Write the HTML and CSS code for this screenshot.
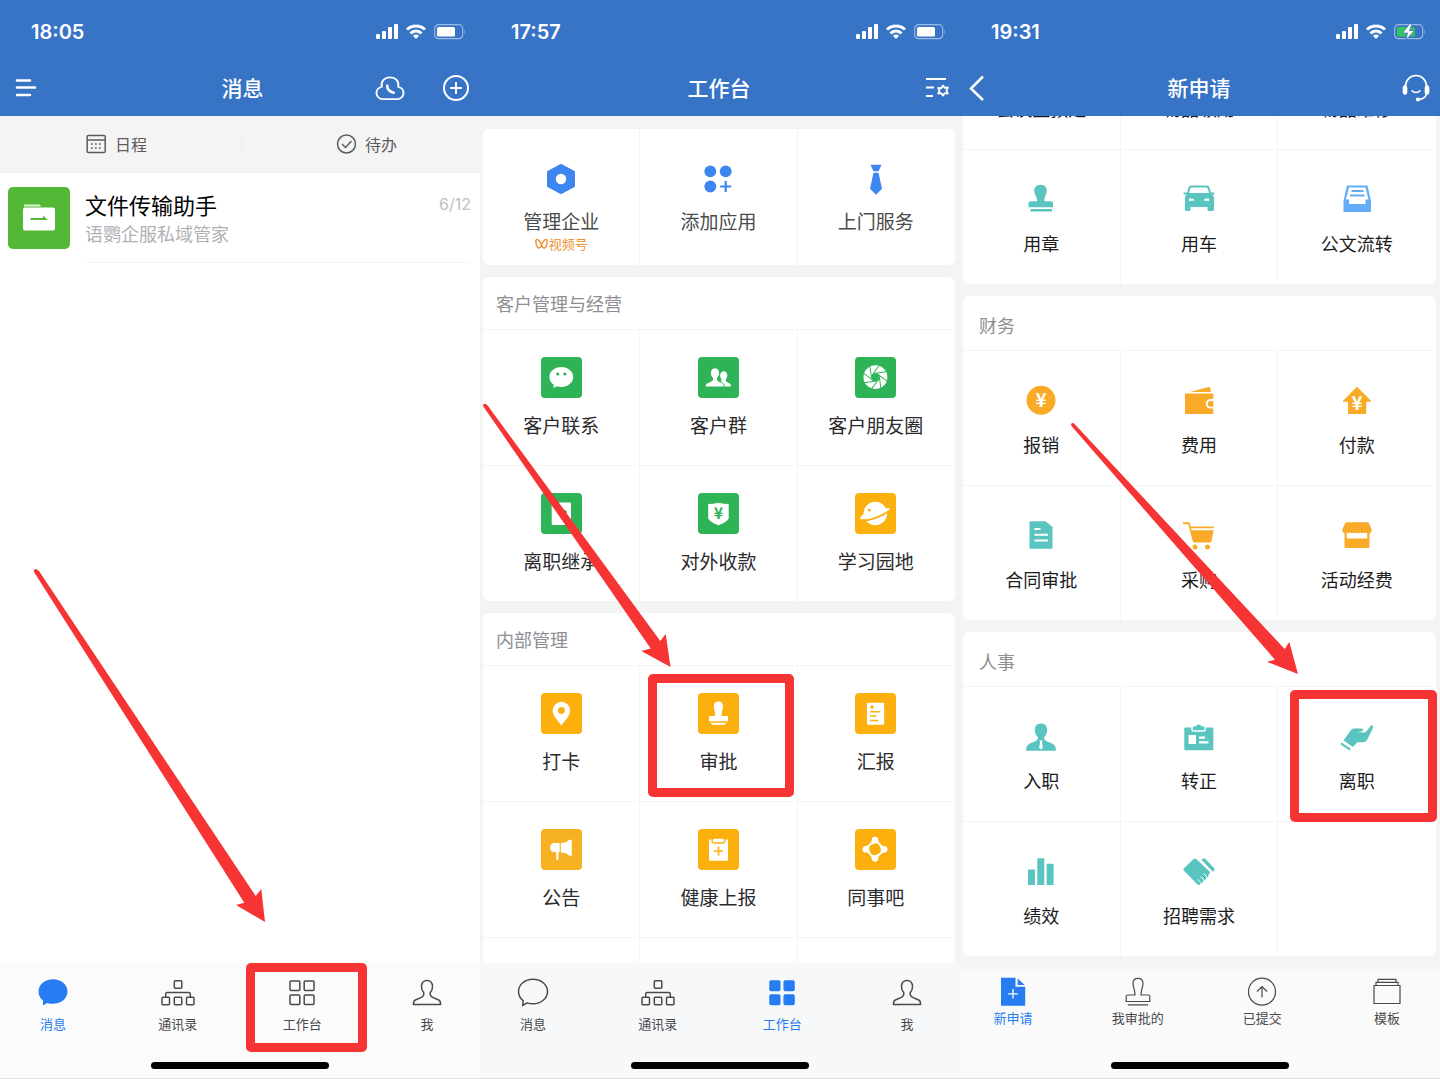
FILE: index.html
```html
<!DOCTYPE html>
<html lang="zh-CN">
<head>
	<meta charset="utf-8">
	<meta name="viewport" content="width=device-width, initial-scale=1">
	<title>企业微信</title>
	<link rel="stylesheet" href="styles.css">
</head>

<body>

<!-- 公用图标 -->
<svg class="sprite" aria-hidden="true">
	<symbol id="i-signal" viewBox="0 0 52 18">
		<rect x="0" y="11" width="4" height="5" rx="1"/><rect x="6" y="8" width="4" height="8" rx="1"/>
		<rect x="12" y="4" width="4" height="12" rx="1"/><rect x="18" y="1" width="4" height="15" rx="1"/>
		<g fill="none" stroke="#fff" stroke-width="3"><path d="M31 6.500a13 13 0 0 1 18 0"/><path d="M34.500 10.300a8 8 0 0 1 11 0"/></g>
		<path d="M40 16l-3-3.200a4.500 4.500 0 0 1 6 0z"/>
	</symbol>
	<symbol id="i-battery" viewBox="0 0 32 18">
		<rect x=".7" y="1.700" width="28" height="14" rx="4" fill="none" stroke="#fff" stroke-opacity=".5" stroke-width="1.200"/>
		<path d="M30.300 6.500q1.500 2.200 0 4.500z" fill-opacity=".5"/>
		<rect x="3" y="4" width="18" height="9.500" rx="1.500"/>
	</symbol>
	<symbol id="i-tree" viewBox="-2 0 36 32">
		<g fill="none" stroke="currentColor" stroke-width="1.500">
			<rect x="12.300" y="3.700" width="7.500" height="7.500" rx="1"/><rect x="0" y="20.200" width="7.500" height="7.500" rx="1"/>
			<rect x="12.300" y="20.200" width="7.500" height="7.500" rx="1"/><rect x="24.500" y="20.200" width="7.500" height="7.500" rx="1"/>
			<path d="M3.700 20v-3q0-1.500 1.500-1.500h21.600q1.500 0 1.500 1.500v3"/>
		</g>
	</symbol>
	<symbol id="i-grid" viewBox="0 0 32 32">
		<rect x="4" y="4" width="9.800" height="9.600" rx="1"/><rect x="18.200" y="4" width="9.800" height="9.600" rx="1"/>
		<rect x="4" y="18" width="9.800" height="9.600" rx="1"/><rect x="18.200" y="18" width="9.800" height="9.600" rx="1"/>
	</symbol>
	<symbol id="i-chat" viewBox="0 0 32 32">
		<path d="M16 2.200C24 2.200 30.500 7.500 30.500 14.500S24 26.800 16 26.800c-2 0-4-.3-5.700-.9L5.800 28.500l.3-4.800C3.300 21.500 1.500 18.200 1.500 14.500 1.500 7.500 8 2.200 16 2.200z"/>
	</symbol>
	<symbol id="i-me" viewBox="0 0 32 32">
		<path fill="none" stroke="currentColor" stroke-width="1.500" stroke-linejoin="round" d="M16 3.400c3.300 0 5.500 2.400 5.500 6 0 2.600-.8 4.600-2.200 6-.5 2.600.2 4 2.400 5l6 2.600c1.400.6 1.900 1.600 1.900 4.600H2.400c0-3 .5-4 1.900-4.600l6-2.600c2.200-1 2.900-2.400 2.400-5-1.400-1.400-2.200-3.400-2.200-6 0-3.600 2.200-6 5.500-6z"/>
	</symbol>
</svg>

<div class="screens">

<!-- 消息 -->
<section class="phone">
	<header class="top">
		<div class="status">
			<span>18:05</span>
			<div class="status-icons">
				<svg width="52" height="18"><use href="#i-signal"/></svg>
				<svg width="32" height="18"><use href="#i-battery"/></svg>
			</div>
		</div>
		<div class="navbar navbar-home">
			<div class="nav-side">
				<button type="button" aria-label="菜单"><svg width="22" height="22" viewBox="0 0 22 22" stroke="#fff" stroke-width="2.500" stroke-linecap="round"><path d="M2 3.500h13M2 10.500h18M2 18h13"/></svg></button>
			</div>
			<h1>消息</h1>
			<div class="nav-side nav-right">
				<button type="button" aria-label="通话"><svg width="30" height="26" viewBox="0 0 32 28" fill="none" stroke="#fff" stroke-width="2"><path d="M8 26a6.700 6.700 0 0 1-1-13.300c-.8-6 3-10.200 9-10.200s9.800 4.200 9 10.200A6.700 6.700 0 0 1 24 26z"/><path d="M13 11.500q0 5.500 7 7.500" stroke-width="2.800" stroke-linecap="round"/></svg></button>
				<button type="button" aria-label="新建"><svg width="28" height="28" viewBox="0 0 28 28" fill="none" stroke="#fff" stroke-width="2"><circle cx="14" cy="14" r="12"/><path d="M14 8v12M8 14h12"/></svg></button>
			</div>
		</div>
	</header>

	<div class="shortcuts">
		<a href="#"><svg width="21" height="20" viewBox="0 0 21 20" fill="none" stroke="#5c5c5e" stroke-width="1.500"><rect x="1.200" y="1.500" width="18" height="17" rx="1"/><path d="M1 6h18.500"/><path stroke-dasharray="1.700 2.300" d="M5 10h11M5 14h11" stroke-width="1.700"/></svg>日程</a>
		<i></i>
		<a href="#"><svg width="21" height="20" viewBox="0 0 21 20" fill="none" stroke="#5c5c5e" stroke-width="1.500"><circle cx="10.500" cy="10" r="9"/><path d="M6 10l3.500 3.500 6-6.500"/></svg>待办</a>
	</div>

	<main class="chats">
		<a class="chat" href="#">
			<svg class="avatar" viewBox="0 0 62 62"><rect width="62" height="62" rx="5" fill="#53b835"/><path d="M16 17.500h16l1 2H16z" fill="#dff3d8"/><rect x="15" y="20.500" width="32" height="23" rx="2" fill="#fff"/><path d="M22.500 31v2H40l-5-4.500V31z" fill="#53b835"/></svg>
			<div class="chat-info">
				<div class="chat-line"><strong>文件传输助手</strong><time>6/12</time></div>
				<p>语鹦企服私域管家</p>
			</div>
		</a>
	</main>

	<nav class="tabbar">
		<div class="tabs">
			<a class="tab on" href="#"><svg width="32" height="32" fill="currentColor"><use href="#i-chat"/></svg>消息</a>
			<a class="tab" href="#"><svg width="36" height="32"><use href="#i-tree"/></svg>通讯录</a>
			<a class="tab" href="#"><svg width="32" height="32" fill="none" stroke="currentColor" stroke-width="1.500"><use href="#i-grid"/></svg>工作台<b class="mark mark-tab"></b></a>
			<a class="tab" href="#"><svg width="32" height="32"><use href="#i-me"/></svg>我</a>
		</div>
		<div class="home-line"></div>
	</nav>

	<svg class="arrow"><path d="M34 572Q33 569 36 569L39 571 255.700 896 261.300 889 265 922 236 905 244.300 902.700z"/></svg>
</section>

<!-- 工作台 -->
<section class="phone desk">
	<header class="top">
		<div class="status">
			<span>17:57</span>
			<div class="status-icons">
				<svg width="52" height="18"><use href="#i-signal"/></svg>
				<svg width="32" height="18"><use href="#i-battery"/></svg>
			</div>
		</div>
		<div class="navbar">
			<div class="nav-side"></div>
			<h1>工作台</h1>
			<div class="nav-side nav-right">
				<button type="button" aria-label="设置"><svg width="25" height="24" viewBox="0 0 25 24" fill="none" stroke="#fff" stroke-width="2.200"><path d="M1 3h20M1 11.500h8M1 20h7"/><path stroke-width="1.800" stroke-linejoin="round" d="M18 9.600l1.800 2.300 3-.4-1.200 2.800.1.900 1.100 2.300-3-.4-1.800 2.500-1.800-2.500-3 .4 1.200-2.700-1.200-2.900 3 .4z"/></svg></button>
			</div>
		</div>
	</header>

	<main class="body">
		<div class="card card-top">
			<a class="cell" href="#">
				<svg class="ico" viewBox="0 0 32 32" fill="#3d86f0"><path stroke="#3d86f0" stroke-width="2" stroke-linejoin="round" d="M16 2l13 7v14l-13 7-13-7V9z"/><circle cx="16" cy="16" r="5.200" fill="#fff"/></svg>
				管理企业
				<small><svg width="13" height="12" viewBox="0 0 13 12" fill="none" stroke="#ef8f31" stroke-width="1.400" stroke-linejoin="round"><path d="M6.500 7C5 3 2.500.5 1.300 1.700S1.500 9.500 3.500 10 6 8 6.500 7C8 3 10.500.5 11.700 1.700S11.500 9.500 9.500 10 7 8 6.500 7z"/></svg>视频号</small>
			</a>
			<a class="cell" href="#">
				<svg class="ico" viewBox="0 0 32 32" fill="#3d86f0"><circle cx="8.300" cy="8.300" r="5.900"/><circle cx="23.700" cy="8.300" r="5.900"/><circle cx="8.300" cy="23.500" r="5.900"/><path d="M23.700 18v11M18.200 23.500h11" stroke="#3d86f0" stroke-width="2.200"/></svg>
				添加应用
			</a>
			<a class="cell" href="#">
				<svg class="ico" viewBox="0 0 32 32" fill="#3d86f0"><path d="M10.500 1.700h11l-3 6.500h-5zM13.500 9.700h5l3.500 16-6 6-6-6z"/></svg>
				上门服务
			</a>
		</div>

		<div class="card">
			<h2>客户管理与经营</h2>
			<a class="cell" href="#">
				<svg class="tile green" viewBox="0 0 41 41"><path d="M20.300 10c6.700 0 11.900 4.400 11.900 10s-5.200 10-11.900 10c-1.500 0-3-.2-4.300-.7L12.300 31l.5-3.200C10 26 8.400 23.200 8.400 20c0-5.600 5.200-10 11.900-10z"/><g fill="#2eb457"><circle cx="16.700" cy="17" r="1.600"/><circle cx="23.900" cy="17" r="1.600"/></g></svg>
				客户联系
			</a>
			<a class="cell" href="#">
				<svg class="tile green" viewBox="0 0 41 41"><path d="M25.800 14.300c2.200 0 3.500 1.700 3.500 4 0 1.700-.6 3-1.500 4-.1 1.500.2 2.400 1.400 3 2.700 1.200 3.800 1.700 3.800 4.200H22l1.500-7c-.8-1-1.300-2.500-1.300-4.200 0-2.300 1.400-4 3.600-4z"/><path stroke="#2eb457" stroke-width="1" d="M17 10.800c2.900 0 4.500 2.200 4.500 5.100 0 2.200-.8 4-2 5-.2 2 .2 3 1.700 3.700 4 1.600 5 2 5 5.400H7.300c0-3.400 1.400-3.800 5.300-5.400 1.700-.7 2.100-1.700 1.900-3.700-1.200-1-2-2.800-2-5 0-2.900 1.600-5.100 4.500-5.100z"/></svg>
				客户群
			</a>
			<a class="cell" href="#">
				<svg class="tile green" viewBox="0 0 41 41"><circle cx="20.400" cy="20.200" r="11.900"/><circle cx="20.400" cy="20.200" r="4" fill="#2eb457"/>
					<g transform="translate(20.400 20.200)" stroke="#2eb457" stroke-width="1"><path id="blade" d="M-1-3.800L11-5.500"/><use href="#blade" transform="rotate(45)"/><use href="#blade" transform="rotate(90)"/><use href="#blade" transform="rotate(135)"/><use href="#blade" transform="rotate(180)"/><use href="#blade" transform="rotate(225)"/><use href="#blade" transform="rotate(270)"/><use href="#blade" transform="rotate(315)"/></g></svg>
				客户朋友圈
			</a>
			<a class="cell" href="#">
				<svg class="tile green" viewBox="0 0 41 41"><rect x="10.700" y="9.500" width="19.300" height="22.500" rx="1"/><path d="M20 18.500q3.500-3.500 6 0l-1 3h-4z" fill="#2eb457"/></svg>
				离职继承
			</a>
			<a class="cell" href="#">
				<svg class="tile green" viewBox="0 0 41 41"><path d="M10.200 11q5 0 10.200-1.200Q25.500 11 30.700 11v14.500q-2.500 4-10.300 6.800-7.700-2.800-10.200-6.800z"/><text x="20.400" y="26" font-size="16" fill="#2eb457">¥</text></svg>
				对外收款
			</a>
			<a class="cell" href="#">
				<svg class="tile" viewBox="0 0 41 41"><circle cx="20.300" cy="20.500" r="11.700"/><path d="M9 22Q2.500 28 8 27.300 14 27.500 22 24.300T34.500 17" fill="none" stroke="#fcb00d" stroke-width="1.800"/><path d="M9.500 20.500Q3.500 25 5.500 26 10 27 20 23.300T34.500 16.700q1-2.500-4-1.200L22 19z"/><circle cx="14.300" cy="17" r="1.500" fill="#fcb00d"/></svg>
				学习园地
			</a>
		</div>

		<div class="card">
			<h2>内部管理</h2>
			<a class="cell" href="#">
				<svg class="tile" viewBox="0 0 41 41"><path d="M20.400 8.800a8.800 8.800 0 0 1 8.800 8.800c0 5-5 10-8.800 14.900-3.800-4.900-8.800-9.900-8.800-14.900a8.800 8.800 0 0 1 8.800-8.800z"/><circle cx="20.400" cy="17.500" r="3.400" fill="#fcb00d"/></svg>
				打卡
			</a>
			<a class="cell" href="#">
				<svg class="tile" viewBox="0 0 41 41"><path d="M20.400 8.500c3 0 4.600 2 4.600 4.600 0 3-1.600 5.500-1.300 10h6.300v5.200H11v-5.200h6.100c.3-4.500-1.300-7-1.300-10 0-2.600 1.600-4.600 4.600-4.600zM12.500 29.700h16l-1.500 2H14z"/></svg>
				审批
				<b class="mark mark-approve"></b>
			</a>
			<a class="cell" href="#">
				<svg class="tile" viewBox="0 0 41 41"><rect x="12" y="9.700" width="17.200" height="22" rx="1"/><circle cx="17" cy="14" r="1.700" fill="#fcb00d"/><path d="M15 18.700h10.500M15 23h6.500M15 27.500h8.500" stroke="#fcb00d" stroke-width="1.500"/></svg>
				汇报
			</a>
			<a class="cell" href="#">
				<svg class="tile notice" viewBox="0 0 41 41"><path d="M18.700 14h-5a4.600 4.600 0 0 0 0 9.300h1.500v7.500h2.200v-7.500h1.300zM19.800 14q5 0 8.500-3.200h2.500v16h-2.500q-3.500-3.300-8.500-3.300z"/></svg>
				公告
			</a>
			<a class="cell" href="#">
				<svg class="tile" viewBox="0 0 41 41"><rect x="11" y="10.500" width="19" height="21.200" rx="1"/><rect x="14" y="9" width="13" height="5" rx="2.500" stroke="#fcb00d" stroke-width="1.300"/><path d="M20.500 17.500v9M16 22h9" stroke="#fcb00d" stroke-width="1.700"/></svg>
				健康上报
			</a>
			<a class="cell" href="#">
				<svg class="tile" viewBox="0 0 41 41"><g transform="translate(20 20.300)"><path id="mate" d="M-3.300-9a3.300 3.300 0 0 1 6.600-.3C3.500-6.500 5.500-5.500 8-3.300 5.500-4.500 3-5.500 1-6 -2-5.700-5-4-7.300-1.500-6-4.500-3.300-6-3.300-9z"/><use href="#mate" transform="rotate(90)"/><use href="#mate" transform="rotate(180)"/><use href="#mate" transform="rotate(270)"/></g></svg>
				同事吧
			</a>
			<div class="cell"></div>
			<div class="cell"></div>
			<div class="cell"></div>
		</div>
	</main>

	<nav class="tabbar">
		<div class="tabs">
			<a class="tab" href="#"><svg width="32" height="32" fill="none" stroke="currentColor" stroke-width="1.500"><use href="#i-chat"/></svg>消息</a>
			<a class="tab" href="#"><svg width="36" height="32"><use href="#i-tree"/></svg>通讯录</a>
			<a class="tab on" href="#"><svg width="32" height="32" fill="currentColor" stroke="currentColor" stroke-width="1.500"><use href="#i-grid"/></svg>工作台</a>
			<a class="tab" href="#"><svg width="32" height="32"><use href="#i-me"/></svg>我</a>
		</div>
		<div class="home-line"></div>
	</nav>

	<svg class="arrow"><path d="M3 406Q3 403 6 404L8 406 180.300 641 185.700 634 190.500 667 161.300 651 170.700 648.500z"/></svg>
</section>

<!-- 新申请 -->
<section class="phone apply">
	<header class="top">
		<div class="status">
			<span>19:31</span>
			<div class="status-icons">
				<svg width="52" height="18"><use href="#i-signal"/></svg>
				<svg width="32" height="18" viewBox="0 0 32 18"><rect x=".7" y="1.700" width="28" height="14" rx="4" fill="none" stroke="#fff" stroke-opacity=".5" stroke-width="1.200"/><path d="M30.300 6.500q1.500 2.200 0 4.500z" fill-opacity=".5"/><rect x="3" y="4" width="18" height="9.500" rx="1.500" fill="#33c759"/><path d="M16 .5L8.500 10h5L12 17l8.500-9.500h-5L18 1z" stroke="#3774c6" stroke-width=".8"/></svg>
			</div>
		</div>
		<div class="navbar">
			<div class="nav-side">
				<button type="button" aria-label="返回"><svg width="18" height="26" viewBox="0 0 18 26" fill="none" stroke="#fff" stroke-width="2.500"><path d="M15 1.500L3 13.500 15 25"/></svg></button>
			</div>
			<h1>新申请</h1>
			<div class="nav-side nav-right">
				<button type="button" aria-label="客服"><svg width="28" height="28" viewBox="0 0 28 28" fill="none" stroke="#fff" stroke-width="1.600"><path d="M3.500 12a10.500 10.500 0 0 1 21 0"/><rect x="1.500" y="12" width="3" height="8" rx="1.500" fill="#fff"/><rect x="23.500" y="12" width="3" height="8" rx="1.500" fill="#fff"/><path d="M24.500 20q-1.500 5-8 5.500M9.500 16.500q4.500 4 9 0"/><circle cx="16" cy="25.500" r="1.300" fill="#fff"/></svg></button>
			</div>
		</div>
	</header>

	<main class="body">
		<div class="card">
			<a class="cell" href="#"><i class="ico"></i>会议室预定</a>
			<a class="cell" href="#"><i class="ico"></i>物品领用</a>
			<a class="cell" href="#"><i class="ico"></i>物品维修</a>
			<a class="cell" href="#">
				<svg class="ico teal" viewBox="0 0 32 32"><path d="M15.500 1.700c4 0 6.300 2.800 6.300 6.300 0 3.500-3 6-2.300 10.300H26q2 0 2 2v4H3.500v-4q0-2 2-2H12c.5-4.300-2.800-6.800-2.800-10.300 0-3.500 2.300-6.300 6.300-6.300zM5.500 26h21.500v2.500H5.500z"/></svg>
				用章
			</a>
			<a class="cell" href="#">
				<svg class="ico teal" viewBox="0 0 32 32"><path fill-rule="evenodd" d="M8.500 2.500h15q2.500 0 3 2l1.500 5h3.500v2h-2.300q1.800 1 1.800 3.500v11.500q0 1.500-1.500 1.500H26q-1.500 0-1.500-1.500V24h-17v2.500Q7.500 28 6 28H3.500Q2 28 2 26.500V15q0-2.500 1.500-3.500H.5v-2H4l1.500-5q.5-2 3-2zm0 2q-1 0-1.500 2l-1 3.500h20l-1-3.500q-.5-2-1.500-2zM6 15.500v2.500l5.500-.5q-.5-2-3-2zm20 0h-2.500q-2.500 0-3 2l5.500.5z"/></svg>
				用车
			</a>
			<a class="cell" href="#">
				<svg class="ico" viewBox="0 0 32 32" fill="#65acf8"><path fill-rule="evenodd" d="M6 2.500h20.500L30 18v11H2.500V18zM8 4.500L5 16.500h3V21h16.500v-4.500h3L24.500 4.500z"/><path d="M10.500 8h12M9 12.500h14.500" stroke="#65acf8" stroke-width="2"/></svg>
				公文流转
			</a>
		</div>

		<div class="card">
			<h2>财务</h2>
			<a class="cell" href="#">
				<svg class="ico gold" viewBox="0 0 32 32"><circle cx="16" cy="16.300" r="14.500"/><text x="16" y="23" font-size="19" fill="#fff">¥</text></svg>
				报销
			</a>
			<a class="cell" href="#">
				<svg class="ico gold" viewBox="0 0 32 32"><path d="M7 8L25.500 3q1.500-.2 1.700 1l.8 4zM2 9.500h28.300V30H2z"/><path d="M30.800 16H27.500a3.800 3.800 0 0 0 0 7.600h3.300" fill="none" stroke="#fff" stroke-width="1.900"/></svg>
				费用
			</a>
			<a class="cell" href="#">
				<svg class="ico gold" viewBox="0 0 32 32"><path d="M16 2.800l14 14v1h-4.800V30H7V17.800H2v-1z"/><text x="16" y="26" font-size="19" fill="#fff">¥</text></svg>
				付款
			</a>
			<a class="cell" href="#">
				<svg class="ico teal" viewBox="0 0 32 32"><path d="M5.500 2.200h15L27.500 8v21.700h-23V3.200q0-1 1-1z"/><path d="M9.500 10h6M9.500 15.700H23M9.500 21.500H23" stroke="#fff" stroke-width="2"/></svg>
				合同审批
			</a>
			<a class="cell" href="#">
				<svg class="ico gold" viewBox="0 0 32 32"><path d="M0 3.300h6.500l1.200 4.200H31l-.3 1.700H8.200l.4 2h22L28.500 22q-.3 1.500-2 1.500h-15q-1.500 0-1.800-1.500L5.200 5.300H0z"/><circle cx="12" cy="28" r="2.500"/><circle cx="24.500" cy="28" r="2.500"/></svg>
				采购
			</a>
			<a class="cell" href="#">
				<svg class="ico gold" viewBox="0 0 32 32"><path d="M6 3.300h20q1.500 0 2 1.200l2.500 5.500q.5 3.500-2 4.500v13.300q0 1.300-1.300 1.300H4.800q-1.300 0-1.300-1.300V14.500q-2.500-1-2-4.500L4 4.500q.5-1.200 2-1.200z"/><path d="M5.800 13.500q1.700 1.500 3.400 0 1.700 1.500 3.400 0 1.700 1.500 3.400 0 1.700 1.500 3.400 0 1.700 1.500 3.400 0 1.700 1.500 3.400 0V19.500H5.800z" fill="#fff"/></svg>
				活动经费
			</a>
		</div>

		<div class="card">
			<h2>人事</h2>
			<a class="cell" href="#">
				<svg class="ico teal" viewBox="0 0 32 32"><path d="M16 3.500c4 0 6.200 2.800 6.200 6.500 0 3-1.200 5.500-3 7-.3 2 .5 3.500 2.500 4.200l5.500 2.300q3.800 2 3.800 7.200H1q0-5.200 3.800-7.200l5.500-2.300c2-.7 2.800-2.200 2.500-4.200-1.800-1.500-3-4-3-7 0-3.700 2.200-6.500 6.200-6.500z"/><path d="M14.500 20.500h3l-.6 2 1 5.200L16 29.500l-1.900-1.800 1-5.200z" fill="#fff"/></svg>
				入职
			</a>
			<a class="cell" href="#">
				<svg class="ico teal" viewBox="0 0 32 32"><rect x="1.300" y="7.500" width="29" height="22.700" rx="1"/><path d="M9 6.500v3q0 1.500 1.500 1.500h10q1.500 0 1.500-1.500v-3" fill="none" stroke="#fff" stroke-width="1.500"/><path d="M10 7q0-.5 3-.8.700-1.700 2.700-1.700t2.700 1.700q3 .3 3 .8v1.500q0 1-1 1h-9.400q-1 0-1-1z"/><path d="M5.500 15h7.500v9H5.500zM16 16.500h6v2.200h-6zM16 21.300h9.500v2.200H16z" fill="#fff"/></svg>
				转正
			</a>
			<a class="cell" href="#">
				<svg class="ico teal" viewBox="0 0 32 32"><path d="M2.500 20.500L10 10q1.200-1.500 3-1.500h7.500q1.800 0 1.800 1.300T20.500 11.500l-4.500.7 7 .3q1.500 0 2.500-1.200L29.500 6q1.200-1.300 2.300-.5t.3 2.200L26 20q-1.200 2.300-4 2.300h-5.500L12 27z"/><path d="M.7 24l7.800 5.200" fill="none" stroke="#5ac4c0" stroke-width="2.200" stroke-linecap="round"/></svg>
				离职
				<b class="mark mark-leave"></b>
			</a>
			<a class="cell" href="#">
				<svg class="ico teal" viewBox="0 0 32 32"><rect x="3" y="14.500" width="7" height="15.500" rx=".5"/><rect x="12.300" y="3.300" width="7" height="26.700" rx=".5"/><rect x="21.600" y="8.700" width="7" height="21.300" rx=".5"/></svg>
				绩效
			</a>
			<a class="cell" href="#">
				<svg class="ico teal" viewBox="0 0 32 32"><path d="M10.500 4q1.500-1.200 3 .2L26.500 16.500q1 1.300 0 2.200l-1.300.8q1 1.500-.3 2.500t-2.200.3q.8 1.500-.5 2.500t-2.200.2q.8 1.500-.5 2.500t-2.200.1q.5 1.500-.5 2.200t-2.300-.2L.8 15.500q-1-1 0-2z"/><path d="M18.500 5l1-1q1.500-1.300 3 0l8.500 9q1 1.300 0 2.500L29.500 17z"/><path d="M16.500 4L29 17" stroke="#fff" stroke-width="1.300"/><path d="M20.500 18.500l3.700 3.500M17.500 21.500l3.500 3.300M14.700 24.500l3 2.700" stroke="#fff" stroke-width="1"/></svg>
				招聘需求
			</a>
			<div class="cell"></div>
		</div>
	</main>

	<nav class="tabbar">
		<div class="tabs">
			<a class="tab on" href="#"><svg width="32" height="32" viewBox="0 0 32 32" fill="currentColor"><path d="M4 1.700h14.500v9h9.700v19H4z"/><path d="M20.700 2.500l7 6.500h-7z"/><path d="M16 13v9.500M11.200 17.800h9.600" stroke="#fff" stroke-width="1.300"/></svg>新申请</a>
			<a class="tab" href="#"><svg width="32" height="32" viewBox="0 0 32 32" fill="none" stroke="currentColor" stroke-width="1.200"><path d="M16 2.300c3.300 0 5 2.200 5 5.200 0 3.500-2 6.500-2 11.500h7.500q1.300 0 1.300 1.300v5.200H4.200v-5.200q0-1.300 1.300-1.300H13c0-5-2-8-2-11.500 0-3 1.700-5.200 5-5.200zM6 28.800h20"/></svg>我审批的</a>
			<a class="tab" href="#"><svg width="32" height="32" viewBox="0 0 32 32" fill="none" stroke="currentColor" stroke-width="1.200"><circle cx="16" cy="15.700" r="13.500"/><path d="M16 21.500V10.500M11 15.500l5-5 5 5"/></svg>已提交</a>
			<a class="tab" href="#"><svg width="32" height="32" viewBox="0 0 32 32" fill="none" stroke="currentColor" stroke-width="1.200"><path d="M3 9.500h26v18H3zM5 9V6.300h22V9M7 6V3.300h18V6"/></svg>模板</a>
		</div>
		<div class="home-line"></div>
	</nav>

	<svg class="arrow"><path d="M111.500 426Q110 423 113.500 423L115 424.500 324.700 649 329.300 642 338 674 306.700 661.700 315 659.700z"/></svg>
</section>

</div>
</body>
</html>
```

FILE: styles.css
```css
*{box-sizing:border-box;}
body{margin:0;background:#f4f4f5;color:#2b2b2d;font-family:"Noto Sans CJK SC","Noto Sans",sans-serif;}
a{color:inherit;text-decoration:none;}
h1,h2,p{margin:0;font-weight:normal;}
button{display:block;padding:0;border:0;background:none;cursor:pointer;}
svg{display:block;}
.sprite{position:absolute;width:0;height:0;}

.screens{display:grid;grid-template-columns:repeat(3,1fr);height:100vh;}
.phone{position:relative;display:flex;flex-direction:column;min-width:0;height:100%;overflow:hidden;background:#f4f4f5;}

/* 顶部 */
.top{flex:none;background:#3774c6;color:#fff;}
.status{display:flex;justify-content:space-between;align-items:center;height:63px;padding:0 14px 0 31px;font:600 20px/24px Inter,sans-serif;}
.status-icons{display:flex;gap:6px;fill:#fff;}
.navbar{display:grid;grid-template-columns:1fr auto 1fr;align-items:center;height:53px;padding:0 10px 3px 8px;}
.navbar-home{padding-left:15px;padding-right:10px;}
.navbar h1{padding-bottom:2px;font-size:21px;line-height:30px;font-weight:500;}
.nav-side{display:flex;align-items:center;}
.nav-right{justify-content:flex-end;gap:37px;}

/* 消息 */
.shortcuts{flex:none;display:flex;justify-content:space-between;align-items:center;height:57px;padding:0 83px 2px 86px;color:#5c5c5e;font-size:16px;line-height:24px;}
.shortcuts a{display:flex;align-items:center;gap:8px;}
.shortcuts i{width:1px;height:20px;background:#eeeef0;}
.chats{flex:1;background:#fff;}
.chat{display:flex;gap:15px;padding:0 9px 0 8px;}
.avatar{flex:none;width:62px;height:62px;margin-top:14px;}
.chat-info{flex:1;height:90px;padding-top:15px;border-bottom:1px solid #f4f4f5;}
.chat-line{display:flex;justify-content:space-between;align-items:center;}
.chat-line strong{font-size:22px;line-height:32px;font-weight:normal;color:#000;}
.chat-line time{font:16px/24px Inter,sans-serif;color:#bfc0c4;}
.chat p{font-size:18px;line-height:26px;color:#b0b1b6;}

/* 应用列表 */
.body{flex:1;display:flex;flex-direction:column;gap:12px;min-height:0;padding:13px 5px 0 3px;overflow:hidden;}
.card{flex:none;display:grid;grid-template-columns:repeat(3,1fr);background:#fff;border-radius:6px;}
.card h2{grid-column:1/-1;padding-left:13px;font-size:18px;line-height:52px;color:#8e8e93;}
.cell{position:relative;display:flex;flex-direction:column;align-items:center;height:136px;padding-top:27px;border-top:1px solid #f5f5f6;border-right:1px solid #f5f5f6;font-size:19px;line-height:28px;}
/* 每行最后一格不要右边线 */
.card .cell:nth-last-child(3n+1){border-right-color:transparent;}
.tile{width:41px;height:41px;margin-bottom:13px;border-radius:4px;background:#fcb00d;fill:#fff;}
.green{background:#2eb457;}
.notice{background:#f6b220;}
.ico{width:32px;height:32px;margin-bottom:12px;}
.tile text,.ico text{font-weight:bold;text-anchor:middle;}
.teal{fill:#5ac4c0;}
.gold{fill:#f9ab27;}
.card-top .cell{padding-top:33px;border-top-color:transparent;color:#4b4b4d;}
.cell small{display:flex;align-items:center;gap:1px;font-size:13px;line-height:18px;color:#ef8f31;}

/* 新申请，列表停在底部 */
.apply .body{justify-content:flex-end;padding:0 4px 13px 3px;}
.apply .card h2{padding:5px 0 0 16px;line-height:49px;}
.apply .cell{height:135px;padding-top:33px;color:#1c1c1e;font-size:18px;}
.apply .ico{margin-bottom:14px;}

/* 底部 */
.tabbar{flex:none;display:flex;flex-direction:column;justify-content:space-between;align-items:center;height:116px;padding:14px 13px 9px;background:#fbfbfb;border-bottom:1px solid #e0e0e2;}
.desk .tabbar{background:#f7f8fa;}
.apply .tabbar{height:110px;padding-top:7px;background:#fafafa;}
.tabs{display:flex;justify-content:space-between;width:100%;}
.tab{position:relative;display:flex;flex-direction:column;align-items:center;gap:5px;width:80px;font-size:13px;line-height:20px;color:#4a4a4d;}
.apply .tab{gap:0;}
.tab.on{color:#267cf0;}
.home-line{width:178px;height:7px;border-radius:4px;background:#000;}

/* 标注 */
.mark{position:absolute;z-index:1;border:9px solid #f73434;border-radius:5px;}
.mark-tab{top:-14px;left:-16px;width:121px;height:89px;}
.mark-approve{top:8px;right:3px;bottom:4px;left:8px;}
.mark-leave{top:3px;right:-2px;bottom:-1px;left:12px;}
.arrow{position:absolute;top:0;left:0;width:100%;height:100%;fill:#f73434;pointer-events:none;}
```
